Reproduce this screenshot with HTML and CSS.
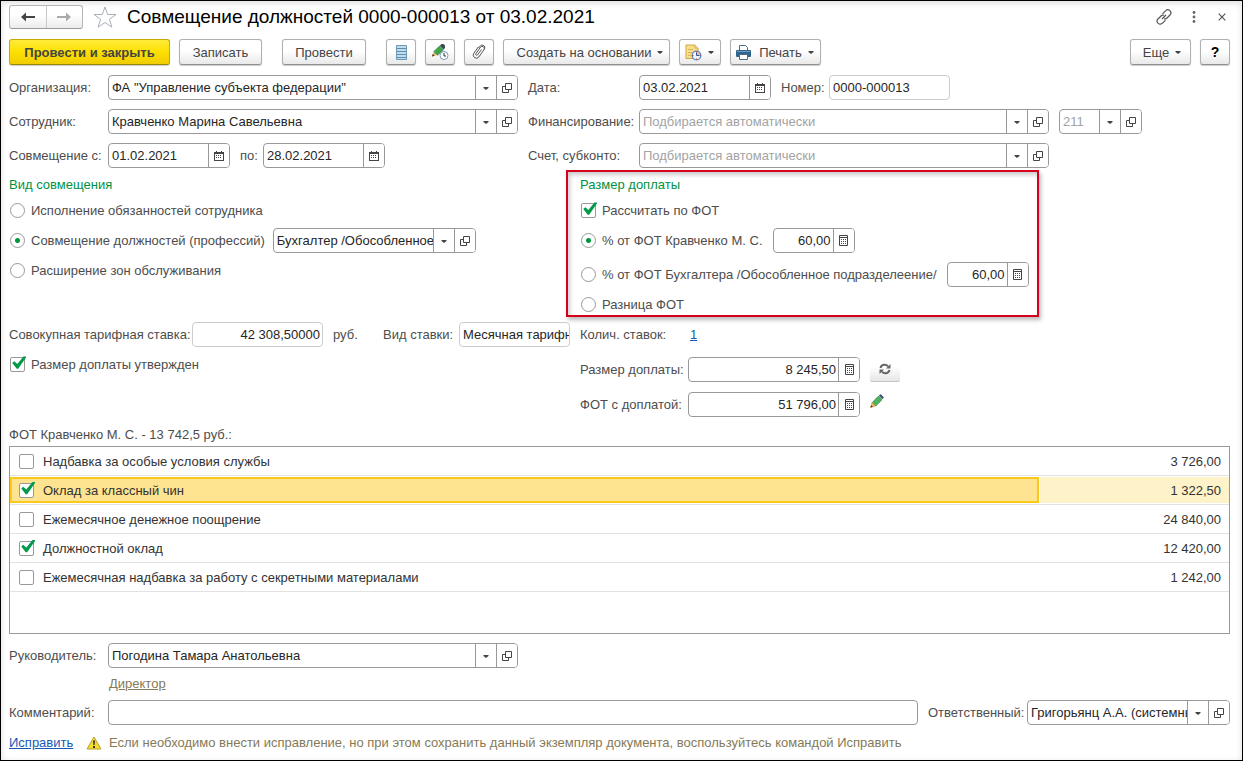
FILE: index.html
```html
<!DOCTYPE html>
<html lang="ru">
<head>
<meta charset="utf-8">
<title>Совмещение должностей 0000-000013 от 03.02.2021</title>
<link rel="stylesheet" href="styles.css">
</head>
<body>
<svg class="sprite" aria-hidden="true">
  <symbol id="i-down" viewBox="0 0 8 8"><path d="M1.500 3h5v1L4 6 1.500 4z" fill="#444"/></symbol>
  <symbol id="i-open" viewBox="0 0 10 10"><path d="M3.500.5h6v6h-6zM3.500 3.500h-3v6h6v-3" fill="none" stroke="#444"/></symbol>
  <symbol id="i-cal" viewBox="0 0 10 10"><path d="M2 0h1v1h4V0h1v1h1v8H1V1h1z" fill="#444"/><path d="M2 3h6v5H2z" fill="#fff"/><path d="M0 1h1v9H0zM9 1h1v9H9zM0 9h10v1H0z" fill="#444"/><path d="M1 3h8v6H1z" fill="#fff"/><path d="M2 4h1v1H2zM4 4h1v1H4zM6 4h1v1H6zM2 6h1v1H2zM4 6h1v1H4zM6 6h1v1H6z" fill="#444"/></symbol>
  <symbol id="i-calc" viewBox="0 0 9 11"><path d="M.5.500h8v10h-8z" fill="#fff" stroke="#444"/><path d="M1 2h7v1H1zM2 4h1v1H2zM4 4h1v1H4zM6 4h1v1H6zM2 6h1v1H2zM4 6h1v1H4zM6 6h1v1H6zM2 8h1v1H2zM4 8h1v1H4zM6 8h1v1H6z" fill="#444"/></symbol>
  <symbol id="i-pencil" viewBox="0 0 14 14"><path d="M.5 13.500l1.500-5 3.500 3.500z" fill="#f2b65a" stroke="#b98434" stroke-width=".5"/><path d="M.5 13.500l.7-2.300 1.600 1.600z" fill="#333"/><path d="M2.500 8.300L8.300 2.300l3.600 3.500-5.900 6z" fill="#4db560" stroke="#2f7d3a" stroke-width=".7"/><path d="M8.800 1.800l1.300-1.300q.5-.4 1 0l2.400 2.400q.4.600 0 1.100l-1.200 1.300z" fill="#44546a"/></symbol>
</svg>
<main class="window">
  <header class="titlebar">
    <div class="nav">
      <button class="nav-btn" aria-label="Назад"><svg width="14" height="10" viewBox="0 0 14 10"><path d="M0 5l5-4.500V4h9v2H5v3.500z" fill="#444"/></svg></button>
      <button class="nav-btn" aria-label="Вперед"><svg width="14" height="10" viewBox="0 0 14 10"><path d="M14 5L9 .5V4H0v2h9v3.500z" fill="#aaa"/></svg></button>
    </div>
    <button class="plain star" aria-label="В избранное"><svg width="24" height="22" viewBox="0 0 24 22"><path d="M12 1l2.700 7.500H23l-6.600 4.900 2.500 7.800-6.900-4.700-6.900 4.700 2.500-7.800L1 8.500h8.300z" fill="#fff" stroke="#aab0b8"/></svg></button>
    <h1>Совмещение должностей 0000-000013 от 03.02.2021</h1>
    <div class="win-tools">
      <button class="plain" aria-label="Ссылка"><svg width="16" height="16" viewBox="0 0 16 16" fill="none" stroke="#555" stroke-width="1.200"><path d="M6.500 4.800l3-3a2.900 2.900 0 0 1 4.500 4.200l-3 3a2.600 2.600 0 0 1-2.800.6M9.500 11.200l-3 3a2.900 2.900 0 0 1-4.500-4.200l3-3a2.600 2.600 0 0 1 2.800-.6M6 10l4-4"/></svg></button>
      <button class="plain dots" aria-label="Меню"><svg width="4" height="12" viewBox="0 0 4 12" fill="#666"><circle cx="2" cy="1.500" r="1.400"/><circle cx="2" cy="6" r="1.400"/><circle cx="2" cy="10.500" r="1.400"/></svg></button>
      <button class="plain" aria-label="Закрыть"><svg width="8" height="8" viewBox="0 0 8 8"><path d="M.7.7l6.600 6.600M7.300.7L.7 7.300" stroke="#555" stroke-width="1.200"/></svg></button>
    </div>
  </header>

  <div class="toolbar">
    <button class="btn primary">Провести и закрыть</button>
    <button class="btn save">Записать</button>
    <button class="btn post">Провести</button>
    <button class="btn icon journal" aria-label="Журнал"><svg width="11" height="15" viewBox="0 0 11 15"><path d="M.5.500h10v14H.5z" fill="#c3dcea" stroke="#6a9ab8"/><path d="M1 3.500h9M1 6.500h9M1 9.500h9M1 12.500h9" stroke="#5b8fb0"/></svg></button>
    <button class="btn icon" aria-label="История"><svg width="18" height="18" viewBox="0 0 18 18"><path d="M1 13.500L2.500 8.500 6 12z" fill="#f2b65a"/><path d="M1 13.500l.7-2.600 1.900 1.900z" fill="#333"/><path d="M2.800 8.500L8.500 3l4 4L6.500 12.300z" fill="#3fa64b" stroke="#2f7d3a" stroke-width=".6"/><path d="M8.800 2.700L10.500 1h2l1.500 1.500v2.500L12.500 6.500z" fill="#3c4a5c"/><circle cx="13" cy="12.500" r="4" fill="#fff" stroke="#7a98bb"/><path d="M13 10v3h2" fill="none" stroke="#333"/></svg></button>
    <button class="btn icon" aria-label="Файлы"><svg width="14" height="16" viewBox="0 0 14 16" fill="none" stroke="#555"><path d="M9.500 5.500L5.600 10.800a1 1 0 0 1-1.700-1.200L8.500 3.300a2.100 2.100 0 0 1 3.500 2.400L6.800 13a3.100 3.100 0 0 1-5.100-3.500L6.500 2.800M12 5.700l.5-.8a2.600 2.600 0 0 0-4.200-3L6.500 4"/></svg></button>
    <button class="btn create">Создать на основании<svg width="8" height="8"><use href="#i-down"/></svg></button>
    <button class="btn schedule" aria-label="Отчеты"><svg width="17" height="17" viewBox="0 0 17 17"><path d="M1 1h9l3 3v10.500H1z" fill="#f9de8c" stroke="#d3a646"/><path d="M10 1v3h3" fill="#fff2c4" stroke="#d3a646"/><path d="M3 5.500h5M3 8.500h4M3 11.500h3" stroke="#d9b457"/><circle cx="11.500" cy="11.500" r="4.300" fill="#eef5ff" stroke="#5b86b8" stroke-width="1.300"/><path d="M11.500 11.500V8A3.500 3.500 0 0 1 15 11.500z" fill="#f0a8a0"/><path d="M11.500 8.500v3h2.500" fill="none" stroke="#345a99"/><path d="M11 7.500h1v1h-1zM11 14.500h1v1h-1zM7.500 11h1v1h-1zM14.500 11h1v1h-1z" fill="#c33"/></svg><svg width="8" height="8"><use href="#i-down"/></svg></button>
    <button class="btn print"><svg class="printer" width="15" height="15" viewBox="0 0 15 15"><path d="M3.500 6V.5h6l2 2V6" fill="#fff" stroke="#4b6b85"/><path d="M1 5h13q1 0 1 1v5q0 1-1 1H1q-1 0-1-1V6q0-1 1-1z" fill="#2f648c"/><path d="M1 6.500h13" stroke="#6f9dbd"/><path d="M3.500 9.500h8v5h-8z" fill="#fff" stroke="#4b6b85"/></svg>Печать<svg width="8" height="8"><use href="#i-down"/></svg></button>
    <button class="btn more">Еще<svg width="8" height="8"><use href="#i-down"/></svg></button>
    <button class="btn icon help" aria-label="Справка">?</button>
  </div>

  <section class="head-grid">
    <div class="stack">
      <div class="row">
        <label class="lbl-left" for="org">Организация:</label>
        <span class="field grow"><input id="org" value="ФА &quot;Управление субъекта федерации&quot;"><button aria-label="Выбрать"><svg width="8" height="8"><use href="#i-down"/></svg></button><button aria-label="Открыть"><svg width="10" height="10"><use href="#i-open"/></svg></button></span>
      </div>
      <div class="row">
        <label class="lbl-left" for="emp">Сотрудник:</label>
        <span class="field grow"><input id="emp" value="Кравченко Марина Савельевна"><button aria-label="Выбрать"><svg width="8" height="8"><use href="#i-down"/></svg></button><button aria-label="Открыть"><svg width="10" height="10"><use href="#i-open"/></svg></button></span>
      </div>
      <div class="row">
        <label class="lbl-left" for="from">Совмещение с:</label>
        <span class="field date"><input id="from" value="01.02.2021"><button aria-label="Календарь"><svg width="10" height="10"><use href="#i-cal"/></svg></button></span>
        <label class="lbl-to" for="to">по:</label>
        <span class="field date"><input id="to" value="28.02.2021"><button aria-label="Календарь"><svg width="10" height="10"><use href="#i-cal"/></svg></button></span>
      </div>
    </div>
    <div class="stack">
      <div class="row">
        <label class="lbl-mid" for="date">Дата:</label>
        <span class="field date-wide"><input id="date" value="03.02.2021"><button aria-label="Календарь"><svg width="10" height="10"><use href="#i-cal"/></svg></button></span>
        <label class="lbl-num" for="num">Номер:</label>
        <span class="field soft num"><input id="num" value="0000-000013"></span>
      </div>
      <div class="row">
        <label class="lbl-mid" for="fin">Финансирование:</label>
        <span class="field account"><input id="fin" placeholder="Подбирается автоматически"><button aria-label="Выбрать"><svg width="8" height="8"><use href="#i-down"/></svg></button><button aria-label="Открыть"><svg width="10" height="10"><use href="#i-open"/></svg></button></span>
        <span class="field code"><input aria-label="КОСГУ" placeholder="211"><button aria-label="Выбрать"><svg width="8" height="8"><use href="#i-down"/></svg></button><button aria-label="Открыть"><svg width="10" height="10"><use href="#i-open"/></svg></button></span>
      </div>
      <div class="row">
        <label class="lbl-mid" for="acc">Счет, субконто:</label>
        <span class="field account"><input id="acc" placeholder="Подбирается автоматически"><button aria-label="Выбрать"><svg width="8" height="8"><use href="#i-down"/></svg></button><button aria-label="Открыть"><svg width="10" height="10"><use href="#i-open"/></svg></button></span>
      </div>
    </div>
  </section>

  <section class="body-grid">
    <div class="group" role="group" aria-labelledby="g1">
      <h2 id="g1">Вид совмещения</h2>
      <div class="row"><label class="opt"><input type="radio" name="kind">Исполнение обязанностей сотрудника</label></div>
      <div class="row"><label class="opt"><input type="radio" name="kind" checked>Совмещение должностей (профессий)</label>
        <span class="field position"><input aria-label="Должность" value="Бухгалтер /Обособленное подразделение/"><button aria-label="Выбрать"><svg width="8" height="8"><use href="#i-down"/></svg></button><button aria-label="Открыть"><svg width="10" height="10"><use href="#i-open"/></svg></button></span></div>
      <div class="row"><label class="opt"><input type="radio" name="kind">Расширение зон обслуживания</label></div>
    </div>
    <div class="group marked" role="group" aria-labelledby="g2">
      <h2 id="g2">Размер доплаты</h2>
      <div class="row"><label class="opt"><input type="checkbox" checked>Рассчитать по ФОТ</label></div>
      <div class="row"><label class="opt"><input type="radio" name="base" checked>% от ФОТ Кравченко М. С.</label>
        <span class="field percent"><input aria-label="Процент" value="60,00"><button aria-label="Калькулятор"><svg width="9" height="11"><use href="#i-calc"/></svg></button></span></div>
      <div class="row second"><label class="opt"><input type="radio" name="base">% от ФОТ Бухгалтера /Обособленное подразделеение/</label>
        <span class="field percent"><input aria-label="Процент" value="60,00"><button aria-label="Калькулятор"><svg width="9" height="11"><use href="#i-calc"/></svg></button></span></div>
      <div class="row"><label class="opt"><input type="radio" name="base">Разница ФОТ</label></div>
    </div>
    <div class="group">
      <div class="row">
        <label class="lbl-rate" for="rate">Совокупная тарифная ставка:</label>
        <span class="field soft rate"><input id="rate" value="42 308,50000"></span>
        <span class="unit">руб.</span>
        <label class="lbl-kind" for="ratekind">Вид ставки:</label>
        <span class="field soft grow"><input id="ratekind" value="Месячная тарифная ставка"></span>
      </div>
      <div class="row"><label class="opt"><input type="checkbox" checked>Размер доплаты утвержден</label></div>
    </div>
    <div class="sums">
      <div class="row"><span class="lbl-count">Колич. ставок:</span><a class="link" href="#">1</a></div>
      <div class="row">
        <label class="lbl-sum" for="extra">Размер доплаты:</label>
        <span class="field sum"><input id="extra" value="8 245,50"><button aria-label="Калькулятор"><svg width="9" height="11"><use href="#i-calc"/></svg></button></span>
        <button class="refresh" aria-label="Обновить"><svg width="12" height="12" viewBox="0 0 12 12" fill="none" stroke="#666" stroke-width="2"><path d="M1.500 5A4.200 4.200 0 0 1 9 3.500M10.500 7A4.200 4.200 0 0 1 3 8.500"/><path d="M11.500 1v4.500H7zM.5 11V6.500H5z" fill="#666" stroke="none"/></svg></button>
      </div>
      <div class="row">
        <label class="lbl-sum" for="fot">ФОТ с доплатой:</label>
        <span class="field sum"><input id="fot" value="51 796,00"><button aria-label="Калькулятор"><svg width="9" height="11"><use href="#i-calc"/></svg></button></span>
        <button class="plain edit" aria-label="Изменить"><svg width="14" height="14"><use href="#i-pencil"/></svg></button>
      </div>
    </div>
  </section>

  <p class="caption" id="cap">ФОТ Кравченко М. С. - 13 742,5 руб.:</p>
  <div class="list">
    <table aria-labelledby="cap">
      <colgroup><col class="c-name"><col></colgroup>
      <tbody>
        <tr><td><label class="cell"><input type="checkbox">Надбавка за особые условия службы</label></td><td><span class="cell amount">3 726,00</span></td></tr>
        <tr class="selected"><td><label class="cell"><input type="checkbox" checked>Оклад за классный чин</label></td><td><span class="cell amount">1 322,50</span></td></tr>
        <tr><td><label class="cell"><input type="checkbox">Ежемесячное денежное поощрение</label></td><td><span class="cell amount">24 840,00</span></td></tr>
        <tr><td><label class="cell"><input type="checkbox" checked>Должностной оклад</label></td><td><span class="cell amount">12 420,00</span></td></tr>
        <tr><td><label class="cell"><input type="checkbox">Ежемесячная надбавка за работу с секретными материалами</label></td><td><span class="cell amount">1 242,00</span></td></tr>
      </tbody>
    </table>
  </div>

  <footer class="footer">
    <div class="row">
      <label class="lbl-left" for="boss">Руководитель:</label>
      <span class="field boss"><input id="boss" value="Погодина Тамара Анатольевна"><button aria-label="Выбрать"><svg width="8" height="8"><use href="#i-down"/></svg></button><button aria-label="Открыть"><svg width="10" height="10"><use href="#i-open"/></svg></button></span>
    </div>
    <div class="post-line"><a class="muted" href="#">Директор</a></div>
    <div class="row">
      <label class="lbl-left" for="comment">Комментарий:</label>
      <span class="field grow"><input id="comment"></span>
      <label class="lbl-resp" for="resp">Ответственный:</label>
      <span class="field resp"><input id="resp" value="Григорьянц А.А. (системный)"><button aria-label="Выбрать"><svg width="8" height="8"><use href="#i-down"/></svg></button><button aria-label="Открыть"><svg width="10" height="10"><use href="#i-open"/></svg></button></span>
    </div>
    <div class="note">
      <a class="link fix" href="#">Исправить</a>
      <svg width="16" height="14" viewBox="0 0 16 14"><path d="M8 1l7 12H1z" fill="#f5dc2c" stroke="#b9a02a" stroke-linejoin="round"/><path d="M7 4.500h2L8.600 9H7.400zM7 10h2v2H7z" fill="#333"/></svg>
      <span class="muted">Если необходимо внести исправление, но при этом сохранить данный экземпляр документа, воспользуйтесь командой Исправить</span>
    </div>
  </footer>
</main>
</body>
</html>
```
FILE: styles.css
```css
* { box-sizing: border-box; }
body {
  margin: 0;
  background: #fff;
  color: #4d4d4d;
  font: 13px/17px "Liberation Sans", Arial, sans-serif;
}
button, input { font: inherit; color: inherit; margin: 0; padding: 0; }
button { cursor: pointer; }
h1, h2, p { margin: 0; font-weight: normal; }
label, .unit, .lbl-count { white-space: nowrap; }
.sprite { display: none; }

.window {
  min-height: 100vh;
  padding: 4px 12px 8px 8px;
  border: 1px solid #000;
  box-shadow: inset 0 2px 6px #ddd;
}

/* Title bar */
.titlebar { display: flex; align-items: center; height: 24px; }
.nav {
  display: flex;
  width: 74px;
  height: 24px;
  border: 1px solid #b5b5b5;
  border-bottom-color: #999;
  border-radius: 3px;
  background: linear-gradient(#fff 40%, #ececec);
}
.nav-btn { flex: 1; display: grid; place-items: center; border: 0; background: none; }
.nav-btn + .nav-btn { border-left: 1px solid #c8c8c8; }
.plain { display: grid; place-items: center; border: 0; background: none; }
.star { margin: 0 10px; }
h1 { color: #000; font-size: 19px; line-height: 24px; white-space: nowrap; }
.win-tools { display: flex; align-items: center; gap: 20px; margin-left: auto; padding-right: 4px; }
.dots { padding: 0 2px 0 0; }

/* Toolbar */
.toolbar { display: flex; gap: 9px; margin-top: 10px; }
.btn {
  display: flex;
  align-items: center;
  justify-content: center;
  gap: 5px;
  height: 26px;
  border: 1px solid #b0b0b0;
  border-bottom-color: #8f8f8f;
  border-radius: 3px;
  background: linear-gradient(#fff 45%, #e9e9e9);
  color: #444;
  white-space: nowrap;
  box-shadow: 0 1px 1px #ccc;
}
.primary {
  width: 161px;
  border-color: #c9a800;
  border-bottom-color: #9c8500;
  background: linear-gradient(#ffec3a, #fde000 50%, #f0cc00);
  font-weight: bold;
}
.save { width: 83px; }
.post { width: 84px; margin-left: 11px; }
.icon { width: 30px; }
.journal { margin-left: 11px; }
.create { width: 167px; padding-left: 8px; }
.schedule { width: 42px; }
.print { width: 91px; }
.printer { margin-right: 3px; }
.more { width: 61px; margin-left: auto; padding-left: 4px; }
.help { color: #000; font-size: 14px; font-weight: bold; }

/* Fields */
.row { display: flex; align-items: center; height: 25px; }
.field {
  display: flex;
  flex: none;
  height: 25px;
  border: 1px solid #999;
  border-radius: 4px;
  background: #fff;
  color: #262626;
  overflow: hidden;
}
.field.grow { flex: 1; min-width: 0; }
.field.soft { border-color: #ccc; }
.field input {
  flex: 1;
  width: 0;
  min-width: 0;
  padding-left: 3px;
  border: 0;
  outline: 0;
  background: none;
}
.field input::placeholder { color: #a3a3a3; opacity: 1; }
.field button {
  display: grid;
  place-items: center;
  flex: none;
  width: 21px;
  border: 0;
  border-left: 1px solid #999;
  background: #fff;
}
.date { width: 122px; }
.date-wide { width: 132px; }
.num { width: 121px; }
.account { flex: 0 1 410px; }
.code { width: 83px; margin-left: 10px; }
.position { width: 203px; margin-left: 8px; }
.percent { width: 82px; margin-left: 10px; }
.rate { width: 131px; }
.sum { width: 172px; }
.boss { width: 410px; }
.resp { width: 203px; }
.percent input, .rate input, .sum input { padding-right: 2px; text-align: right; }

.lbl-left { width: 99px; }
.lbl-to { width: 33px; padding-left: 10px; }
.lbl-mid { width: 111px; }
.lbl-num { width: 58px; padding-left: 10px; }
.lbl-rate { width: 183px; }
.lbl-kind { width: 76px; }
.unit { width: 60px; padding-left: 10px; }
.lbl-count { width: 110px; }
.lbl-sum { width: 108px; }
.lbl-resp { width: 109px; padding-left: 10px; }

/* Form areas */
.head-grid {
  display: grid;
  grid-template-columns: minmax(0, 509fr) minmax(0, 702fr);
  column-gap: 10px;
  margin-top: 10px;
}
.stack { display: grid; gap: 9px; }
.body-grid {
  display: grid;
  grid-template-columns: minmax(0, 561fr) minmax(0, 650fr);
  gap: 5px 10px;
  margin-top: 9px;
}
.group { display: flex; flex-direction: column; gap: 5px; }
h2 { color: #00923f; font-size: 13px; line-height: 16px; }
.second { margin-top: 4px; }
.sums { display: grid; gap: 10px; }

/* Red frame drawn around the surcharge settings */
.marked { position: relative; justify-self: start; }
.marked::after {
  content: "";
  position: absolute;
  inset: -7px -10px 0 -14px;
  border: 2px solid #d6001c;
  box-shadow: 2px 3px 4px #bbb, inset 2px 3px 4px #ccc;
  pointer-events: none;
}

/* Check boxes and radio buttons */
.opt { display: flex; align-items: center; gap: 6px; padding-left: 1px; }
input[type="checkbox"], input[type="radio"] {
  appearance: none;
  position: relative;
  flex: none;
  width: 15px;
  height: 15px;
  border: 1px solid #999;
  border-radius: 2px;
  background: #fff;
}
input[type="radio"] { border-radius: 50%; }
input[type="radio"]:checked { background: radial-gradient(circle, #00963f 2px, #fff 3px); }
input[type="checkbox"]:checked::after {
  content: "";
  position: absolute;
  inset: -2px -2px 2px 1px;
  background: #009a49;
  clip-path: polygon(2% 54%, 16% 40%, 38% 62%, 82% 4%, 100% 4%, 100% 12%, 44% 98%, 34% 98%);
}

.refresh {
  display: grid;
  place-items: center;
  width: 30px;
  height: 25px;
  margin-left: 10px;
  border: 0;
  border-bottom: 1px solid #c4c4c4;
  border-radius: 2px;
  background: linear-gradient(#fff 40%, #e6e6e6);
}
.edit { margin-left: 10px; padding-bottom: 8px; }

/* Accruals list */
.caption { margin-top: 9px; padding-bottom: 3px; }
.list { min-height: 188px; border: 1px solid #999; }
table { width: 100%; border-spacing: 0; table-layout: fixed; color: #333; }
.c-name { width: 84.4%; }
td { height: 29px; padding: 1px 0; border-bottom: 1px solid #e2e2e2; }
.cell { display: flex; align-items: center; gap: 9px; height: 26px; padding-left: 9px; }
.amount { justify-content: flex-end; padding: 0 8px 0 0; }
.selected label { padding-left: 7px; border: 2px solid #fbc91c; background: #fee491; }
.selected .amount { margin-left: 1px; background: #fdf2c8; }

/* Footer */
.footer { margin-top: 9px; }
.post-line { height: 32px; padding: 7px 0 0 100px; }
.muted { color: #857a58; }
.link { color: #1657b8; }
.note { display: flex; align-items: center; gap: 7px; margin-top: 9px; white-space: nowrap; }
.fix { width: 70px; }
```
